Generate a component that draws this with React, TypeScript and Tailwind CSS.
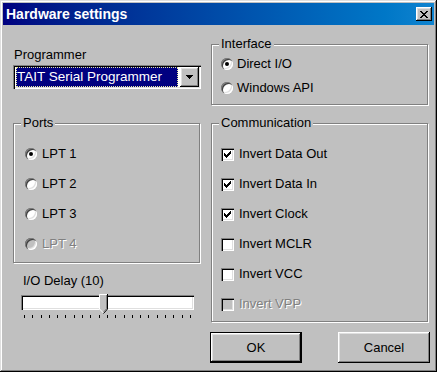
import React from "react";

const sunken =
  "shadow-[inset_1px_1px_0_#808080,inset_2px_2px_0_#000,inset_-1px_-1px_0_#fff,inset_-2px_-2px_0_#dfdfdf]";
const raised =
  "shadow-[inset_-1px_-1px_0_#000,inset_1px_1px_0_#fff,inset_-2px_-2px_0_#808080,inset_2px_2px_0_#dfdfdf]";

function Radio({ checked, disabled }: { checked?: boolean; disabled?: boolean }) {
  return (
    <span
      className={`relative block w-[12px] h-[12px] rounded-full shrink-0 ${
        disabled ? "bg-[#c0c0c0]" : "bg-white"
      } shadow-[inset_1px_1px_0_#808080,inset_2px_2px_0_#404040,inset_-1px_-1px_0_#fff,inset_-2px_-2px_0_#dfdfdf]`}
    >
      {checked ? (
        <span className="absolute left-[4px] top-[4px] w-[4px] h-[4px] rounded-full bg-black" />
      ) : null}
    </span>
  );
}

function Check({ checked, disabled }: { checked?: boolean; disabled?: boolean }) {
  return (
    <span
      className={`relative block w-[13px] h-[13px] shrink-0 ${
        disabled ? "bg-[#c0c0c0]" : "bg-white"
      } ${sunken}`}
    >
      {checked ? (
        <svg
          className="absolute left-[3px] top-[3px]"
          width="7"
          height="7"
          viewBox="0 0 7 7"
          shapeRendering="crispEdges"
        >
          <rect x="6" y="0" width="1" height="1" fill="#000" />
          <rect x="5" y="1" width="2" height="1" fill="#000" />
          <rect x="0" y="2" width="1" height="1" fill="#000" />
          <rect x="4" y="2" width="3" height="1" fill="#000" />
          <rect x="0" y="3" width="2" height="1" fill="#000" />
          <rect x="3" y="3" width="3" height="1" fill="#000" />
          <rect x="0" y="4" width="5" height="1" fill="#000" />
          <rect x="1" y="5" width="3" height="1" fill="#000" />
          <rect x="2" y="6" width="1" height="1" fill="#000" />
        </svg>
      ) : null}
    </span>
  );
}

function GroupBox({
  label,
  className,
  children,
}: {
  label: string;
  className: string;
  children: React.ReactNode;
}) {
  return (
    <div
      className={`relative border border-[#808080] shadow-[1px_1px_0_#fff,inset_1px_1px_0_#fff] ${className}`}
    >
      <span className="absolute top-[-9px] left-[7px] px-[2px] bg-[#c0c0c0]">{label}</span>
      {children}
    </div>
  );
}

function Label({ text, disabled }: { text: string; disabled?: boolean }) {
  return disabled ? (
    <span className="text-[#808080] [text-shadow:1px_1px_0_#fff]">{text}</span>
  ) : (
    <span>{text}</span>
  );
}

export default function App() {
  const ports = ["LPT 1", "LPT 2", "LPT 3", "LPT 4"];
  const comm = [
    { label: "Invert Data Out", checked: true },
    { label: "Invert Data In", checked: true },
    { label: "Invert Clock", checked: true },
    { label: "Invert MCLR", checked: false },
    { label: "Invert VCC", checked: false },
    { label: "Invert VPP", checked: false, disabled: true },
  ];

  return (
    <div
      className={`w-[437px] h-[372px] bg-[#c0c0c0] p-[3px] flex flex-col text-[13px] leading-[16px] text-black font-['Liberation_Sans',Arial,sans-serif] shadow-[inset_-1px_-1px_0_#000,inset_1px_1px_0_#dfdfdf,inset_-2px_-2px_0_#808080,inset_2px_2px_0_#fff]`}
    >
      <div className="h-[22px] shrink-0 flex items-center justify-between pl-[3px] pr-[2px] bg-linear-to-r from-[#000080] to-[#1084d0]">
        <span className="text-white font-bold text-[14px]">Hardware settings</span>
        <div className={`w-[16px] h-[14px] bg-[#c0c0c0] flex items-center justify-center ${raised}`}>
          <svg width="8" height="7" viewBox="0 0 8 7" shapeRendering="crispEdges">
            <path d="M0 0h2v1H0zM6 0h2v1H6zM1 1h2v1H1zM5 1h2v1H5zM2 2h4v1H2zM3 3h2v1H3zM2 4h4v1H2zM1 5h2v1H1zM5 5h2v1H5zM0 6h2v1H0zM6 6h2v1H6z" fill="#000" />
          </svg>
        </div>
      </div>

      <div className="flex gap-[10px] pl-[10px]">
        {/* left column */}
        <div className="w-[188px] flex flex-col">
          <div className="mt-[22px] h-[16px] pl-px">Programmer</div>
          <div className={`mt-[2px] h-[24px] w-[188px] bg-white flex p-[2px] ${sunken}`}>
            <div className="ml-px w-[162px] h-full bg-[#000080] text-white text-[13.5px] border border-dotted border-[#e8e8a0] flex items-center">
              TAIT Serial Programmer
            </div>
            <div className={`ml-auto w-[19px] h-full bg-[#c0c0c0] flex items-center justify-center ${raised}`}>
              <svg width="7" height="4" viewBox="0 0 7 4" shapeRendering="crispEdges">
                <path d="M0 0h7v1H0zM1 1h5v1H1zM2 2h3v1H2zM3 3h1v1H3z" fill="#000" />
              </svg>
            </div>
          </div>

          <GroupBox label="Ports" className="mt-[34px] h-[140px] w-[187px] pt-[15px] pl-[11px]">
            <div className="flex flex-col">
              {ports.map((p, i) => (
                <div key={p} className="h-[30px] flex items-center gap-[5px]">
                  <Radio checked={i === 0} disabled={i === 3} />
                  <Label text={p} disabled={i === 3} />
                </div>
              ))}
            </div>
          </GroupBox>

          <div className="mt-[10px] h-[16px] pl-[10px]">I/O Delay (10)</div>
          <div className="relative mt-[5px] ml-[8px] w-[173px] h-[19px]">
            <div className={`mt-px h-[15px] w-full bg-white ${sunken}`} />
            <svg className="absolute top-0 left-[78px]" width="9" height="20" viewBox="0 0 9 20">
              <polygon points="0,0 9,0 9,15 4.5,19.5 0,15" fill="#c0c0c0" />
              <polyline points="0.5,15 0.5,0.5 8.5,0.5" fill="none" stroke="#fff" />
              <polyline points="0.5,15 4.5,19" fill="none" stroke="#fff" />
              <polyline points="8.5,0 8.5,15 4.5,19.5" fill="none" stroke="#000" />
              <polyline points="7.5,1 7.5,14.6 4.5,18" fill="none" stroke="#808080" />
            </svg>
          </div>
          <div className="mt-[2px] ml-[11px] w-[167px] flex justify-between">
            {Array.from({ length: 21 }).map((_, i) => (
              <span key={i} className="block w-px h-[3px] bg-black" />
            ))}
          </div>
        </div>

        {/* right column */}
        <div className="w-[217px] flex flex-col">
          <GroupBox label="Interface" className="mt-[19px] h-[61px] pt-[11px] pl-[9px]">
            <div className="flex flex-col gap-[8px]">
              <div className="h-[16px] flex items-center gap-[4px]">
                <Radio checked />
                <span>Direct I/O</span>
              </div>
              <div className="h-[16px] flex items-center gap-[4px]">
                <Radio />
                <span>Windows API</span>
              </div>
            </div>
          </GroupBox>

          <GroupBox label="Communication" className="mt-[18px] h-[199px] pt-[15px] pl-[9px]">
            <div className="flex flex-col">
              {comm.map((c) => (
                <div key={c.label} className="h-[30px] flex items-center gap-[5px]">
                  <Check checked={c.checked} disabled={c.disabled} />
                  <Label text={c.label} disabled={c.disabled} />
                </div>
              ))}
            </div>
          </GroupBox>

          <div className="mt-[10px] -ml-px w-[220px] flex justify-between">
            <button className={`w-[92px] h-[31px] border border-black bg-[#c0c0c0] flex items-center justify-center ${raised}`}>
              OK
            </button>
            <button className={`w-[92px] h-[31px] bg-[#c0c0c0] flex items-center justify-center ${raised}`}>
              Cancel
            </button>
          </div>
        </div>
      </div>
    </div>
  );
}
